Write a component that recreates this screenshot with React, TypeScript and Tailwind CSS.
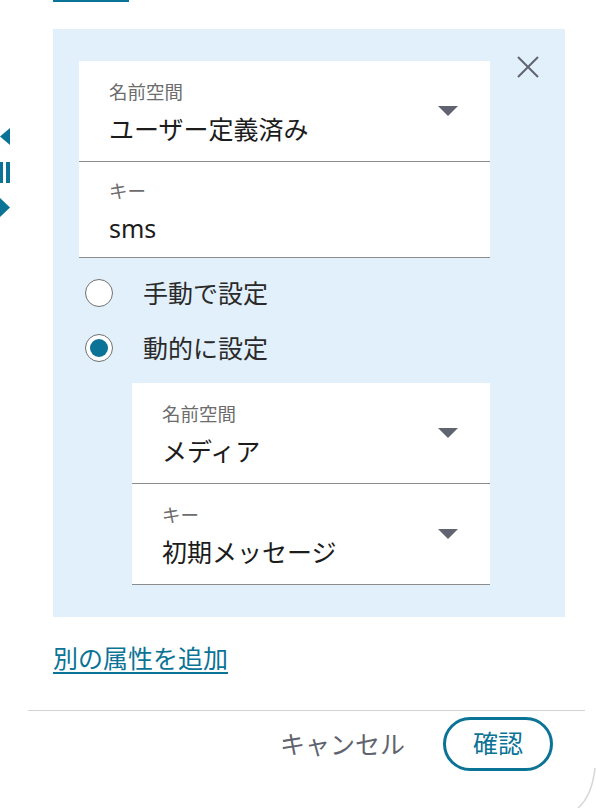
import React from "react";

const TEAL = "#0b7396";

type FieldProps = {
  label: string;
  value: string;
  arrow?: boolean;
  compact?: boolean;
  className?: string;
};

function Caret() {
  return (
    <svg width="20" height="10" viewBox="0 0 20 10" className="shrink-0">
      <path d="M0 0 H20 L10 10 Z" fill="#5f6470" />
    </svg>
  );
}

function Field({ label, value, arrow, compact, className }: FieldProps) {
  return (
    <div
      className={
        "flex items-center bg-white border-b border-[#8c8c8c] pl-[30px] pr-[32px] " +
        (className ?? "")
      }
    >
      <div
        className={
          "flex-1 flex flex-col " +
          (compact ? "pt-[17px] pb-[13px]" : "pt-[19px] pb-[16px]")
        }
      >
        <span className="h-[24px] leading-[24px] text-[18.5px] text-[#6c6c6c]">
          {label}
        </span>
        <span className="mt-[9px] h-[32px] leading-[32px] text-[25px] text-[#1c1c1c]">
          {value}
        </span>
      </div>
      {arrow && <Caret />}
    </div>
  );
}

function Radio({ label, checked }: { label: string; checked?: boolean }) {
  return (
    <div className="flex items-center h-[40px] ml-[6px]">
      <div className="w-[28px] h-[28px] rounded-full border border-[#707070] bg-white flex items-center justify-center">
        {checked && (
          <div className="w-[18px] h-[18px] rounded-full bg-[#0b7396]" />
        )}
      </div>
      <span className="ml-[30px] text-[25px] leading-[32px] text-[#2a2a2a]">
        {label}
      </span>
    </div>
  );
}

export default function App() {
  return (
    <div
      className="relative w-[596px] h-[808px] bg-white overflow-hidden flex"
      style={{ fontFamily: '"Noto Sans", "Noto Sans CJK JP", sans-serif' }}
    >
      {/* cut-off media controls on the left */}
      <div className="w-[28px] shrink-0 flex flex-col pt-[128px]">
        <svg width="10" height="17" viewBox="0 0 10 17">
          <path d="M10 0 V17 L0 8.5 Z" fill={TEAL} />
        </svg>
        <div className="flex gap-[3px] mt-[17px]">
          <div className="w-[3px] h-[21px] bg-[#0b7396]" />
          <div className="w-[4px] h-[21px] bg-[#0b7396]" />
        </div>
        <svg width="10" height="19" viewBox="0 0 10 19" className="mt-[15px]">
          <path d="M0 0 V19 L10 9.5 Z" fill={TEAL} />
        </svg>
      </div>

      {/* dialog body */}
      <div className="flex flex-col w-[562px]">
        <div className="ml-[25px] w-[76px] h-[2px] bg-[#0b7396]" />

        <div className="ml-[25px] mt-[27px] w-[512px] bg-[#e2f0fb] flex">
          <div className="ml-[26px] mt-[32px] mb-[32px] w-[411px] flex flex-col">
            <Field label="名前空間" value="ユーザー定義済み" arrow />
            <Field label="キー" value="sms" compact />

            <div className="mt-[15px] flex flex-col gap-[15px]">
              <Radio label="手動で設定" />
              <Radio label="動的に設定" checked />
            </div>

            <div className="mt-[15px] ml-[53px] flex flex-col">
              <Field label="名前空間" value="メディア" arrow />
              <Field label="キー" value="初期メッセージ" arrow />
            </div>
          </div>

          <button className="ml-[27px] mt-[27px] w-[22px] h-[22px] shrink-0">
            <svg width="22" height="22" viewBox="0 0 22 22">
              <path
                d="M1 1 L21 21 M21 1 L1 21"
                stroke="#5f6470"
                strokeWidth="2"
              />
            </svg>
          </button>
        </div>

        <a
          href="#"
          className="ml-[25px] mt-[25px] self-start text-[25px] leading-[32px] text-[#0b7396] underline decoration-2 underline-offset-[4px]"
        >
          別の属性を追加
        </a>

        <div className="mt-[36px] w-[557px] h-px bg-[#d3d3d3]" />

        <div className="mt-[6px] flex items-center justify-end gap-[38px] pr-[37px]">
          <span className="text-[25px] leading-[32px] text-[#5f6470]">
            キャンセル
          </span>
          <button className="w-[110px] h-[54px] rounded-full border-[3px] border-[#0b7396] text-[25px] text-[#0b7396] flex items-center justify-center">
            確認
          </button>
        </div>
      </div>

      {/* faint corner of the window behind */}
      <svg
        className="absolute right-0 bottom-0"
        width="20"
        height="40"
        viewBox="0 0 20 40"
      >
        <path d="M19 0 Q16 28 2 40" stroke="#d6d6d6" fill="none" strokeWidth="1.5" />
      </svg>
    </div>
  );
}
